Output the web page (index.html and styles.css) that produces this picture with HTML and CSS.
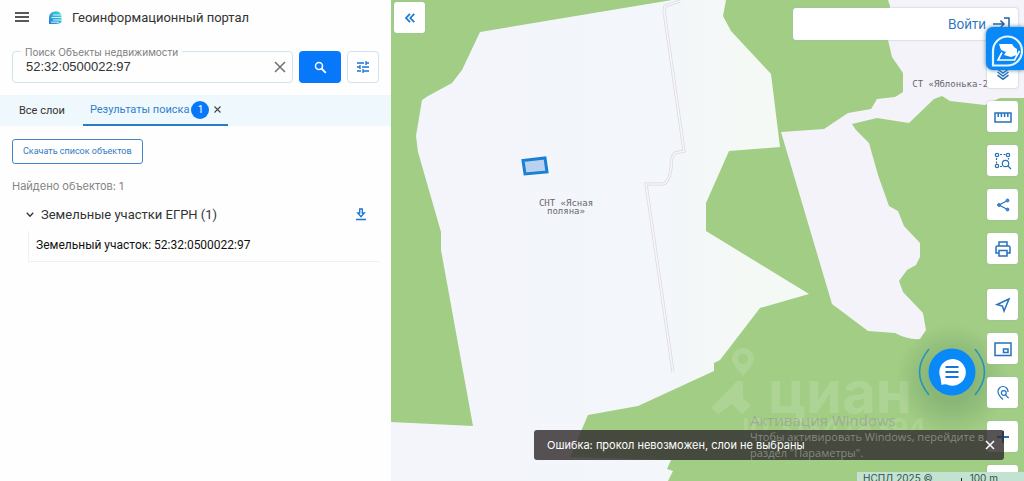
FILE: index.html
```html
<!DOCTYPE html>
<html lang="ru">
<head>
<meta charset="utf-8">
<title>Геоинформационный портал</title>
<link rel="stylesheet" href="styles.css">
</head>
<body>
<div class="app">
  <aside class="panel">
    <header class="header">
      <button class="icon-btn" type="button" aria-label="Меню">
        <svg width="14" height="12" viewBox="0 0 14 12"><path d="M0 1h14M0 5h14M0 9h14" stroke="#222" stroke-width="1.5"/></svg>
      </button>
      <svg class="logo" width="15" height="15" viewBox="0 0 15 15">
        <defs><linearGradient id="lg" x1="0" y1="1" x2="1" y2="0"><stop offset="0" stop-color="#2a7be0"/><stop offset="1" stop-color="#35dfd0"/></linearGradient></defs>
        <path d="M1 14V7a6.500 6.500 0 0 1 12.500-1.500V12q-2 2-5.500 2z" fill="url(#lg)"/>
        <path d="M5 5h9M3.500 7.500h11M5 10h9M3 12.200h8" stroke="#e8fbff" stroke-width=".9"/>
      </svg>
      <h1 class="title">Геоинформационный портал</h1>
    </header>

    <form class="search">
      <div class="field">
        <label class="field-label" for="query">Поиск Объекты недвижимости</label>
        <input class="field-input" id="query" type="text" value="52:32:0500022:97">
        <button class="icon-btn" type="button" aria-label="Очистить">
          <svg width="12" height="12" viewBox="0 0 12 12"><path d="M1 1l10 10M11 1L1 11" stroke="#707070" stroke-width="1.5"/></svg>
        </button>
      </div>
      <button class="find" type="button" aria-label="Найти">
        <svg width="13" height="13" viewBox="0 0 13 13" fill="none" stroke="#fff"><circle cx="5" cy="5" r="3.500" stroke-width="1.500"/><path d="M7.500 7.500l4.300 4.300" stroke-width="1.900"/></svg>
      </button>
      <button class="tune" type="button" aria-label="Фильтр">
        <svg width="14" height="14" viewBox="0 0 14 14" fill="none" stroke="#1976d2" stroke-width="1.300"><path d="M1 3h7M10 3h3M10 1v4M1 7h3M6 7h7M4 5v4M1 11h4M7 11h6M7 9v4"/></svg>
      </button>
    </form>

    <nav class="tabs">
      <button class="tab" type="button">Все слои</button>
      <div class="tab-active">
        <button class="tab tab-current" type="button">Результаты поиска<span class="count">1</span></button>
        <button class="icon-btn" type="button" aria-label="Закрыть вкладку">
          <svg width="7" height="7" viewBox="0 0 7 7"><path d="M.5.5l6 6M6.500.5l-6 6" stroke="#444" stroke-width="1.100"/></svg>
        </button>
      </div>
    </nav>

    <section class="results">
      <button class="download" type="button">Скачать список объектов</button>
      <p class="found">Найдено объектов: 1</p>
      <div class="group">
        <button class="group-name" type="button">
          <svg width="8" height="6" viewBox="0 0 8 6"><path d="M.8.8L4 4.200 7.200.8" fill="none" stroke="#333" stroke-width="1.300"/></svg>
          Земельные участки ЕГРН (1)
        </button>
        <button class="icon-btn" type="button" aria-label="Скачать">
          <svg width="10" height="13" viewBox="0 0 10 13" fill="none" stroke="#1976d2" stroke-width="1.300"><path d="M3.700 1h2.600v4h2L5 8.700 1.700 5h2zM0 11.500h10"/></svg>
        </button>
      </div>
      <a class="item" href="#parcel">Земельный участок: 52:32:0500022:97</a>
    </section>
  </aside>

  <main class="map">
    <svg class="canvas" viewBox="391 0 633 481" preserveAspectRatio="xMinYMin slice">
      <defs>
        <linearGradient id="land" gradientUnits="userSpaceOnUse" x1="391" y1="0" x2="800" y2="0"><stop offset="0" stop-color="#f3f5fa"/><stop offset=".68" stop-color="#f3f6fa"/><stop offset=".85" stop-color="#f4f9f6"/></linearGradient>
        <radialGradient id="halo"><stop offset=".4" stop-color="#4d7a55" stop-opacity=".28"/><stop offset="1" stop-color="#4d7a55" stop-opacity="0"/></radialGradient>
      </defs>
      <rect x="391" width="633" height="481" fill="#a1cd84"/>
      <path fill="url(#land)" d="M672 0H726L723 16 731 31 771 74 780 147 729 151 706 203V231L809 294 760 308 720 360 714 363V371L638 406 588 415 570 457 671 460 667 469 673 471 668 481H391V422L473 426 441 250V232L418 152 416 136 422 100 428 96 452 83 462 70 480 32z"/>
      <path fill="#f4f3fa" d="M888 0L890 6 888 40 892 57 903 73V92L895 97 877 99 871 109 848 113 824 129 781 132 832 304 868 331 895 333Q908 340 920 339L926 330 923 313 903 292 899 281 907 270 916 265 920 257V243L904 226 898 211 889 206 878 175 869 143 856 130 852 124 877 118 909 123 934 99 942 96 950 101 985 105 1000 98H1024V0z"/>
      <g fill="none"><path stroke="#ddd6df" stroke-width="3" d="M680 1L665 6 664 11 684 151 675 153Q671 156 671 168 669 184 662 184H646L673 372"/><path stroke="#f4f5fa" stroke-width="1.700" d="M680 1L665 6 664 11 684 151 675 153Q671 156 671 168 669 184 662 184H646L673 372"/></g>
      <path d="M523 160.500L545 158 547 172 525 174z" fill="#b9d2f0" stroke="#1a80d6" stroke-width="3"/>
      <g class="place"><text x="566" y="206">СНТ «Ясная</text><text x="566" y="214">поляна»</text><text x="953" y="87">СТ «Яблонька-2»</text></g>
      <g class="mark">
        <path d="M743 348a11 11 0 0 1 11 11q0 6-11 17-11-11-11-17a11 11 0 0 1 11-11zm0 6a5 5 0 1 0 0 10 5 5 0 0 0 0-10z"/>
        <path d="M711 408L737 381H743V398L751 406 742 414 732 404 718 414z"/>
        <text class="mark-name" x="768" y="413">циан</text><text class="mark-id" x="742" y="438">ID 318478394</text>
      </g>
      <circle cx="952" cy="380" r="56" fill="url(#halo)"/>
    </svg>

    <button class="tool collapse" type="button" aria-label="Свернуть панель">
      <svg width="10" height="10" viewBox="0 0 10 10" fill="none" stroke="#1976d2" stroke-width="1.700"><path d="M5 .8L1 5l4 4.200M9.300.8l-4 4.200 4 4.200"/></svg>
    </button>

    <div class="login-bar">
      <a class="login" href="#login">Войти
        <svg width="17" height="14" viewBox="0 0 17 14" fill="none" stroke="#1c62a8" stroke-width="1.500"><path d="M0 7h11M7.500 3.500L11 7l-3.500 3.500M11 1h5v12h-5"/></svg>
      </a>
    </div>

    <div class="tools">
      <button class="tool" type="button" aria-label="Слои"><svg viewBox="0 0 20 20"><path d="M4.500 6l5.500-4 5.500 4-5.500 4zM4.500 9l5.500 4 5.500-4M4.500 12.200l5.500 4 5.500-4"/></svg></button>
      <button class="tool" type="button" aria-label="Линейка"><svg viewBox="0 0 20 20"><path d="M2 6h16v9H2zM5.200 6v4M8.400 6v4M11.600 6v4M14.800 6v4"/></svg></button>
      <button class="tool" type="button" aria-label="Поиск в области"><svg viewBox="0 0 20 20"><g stroke-width="1.200"><circle cx="4" cy="4" r="1.700"/><circle cx="15" cy="4" r="1.700"/><circle cx="4" cy="15" r="1.700"/><path d="M7 3.500h2m1.500 0h2M3.500 7v2m0 1.500v2M15.500 7v1.500M7 15.500h2M15 15l3 3"/><circle cx="12.500" cy="12.500" r="3.200"/></g></svg></button>
      <button class="tool" type="button" aria-label="Поделиться"><svg viewBox="0 0 20 20"><path stroke-width="1.200" d="M14.500 5.500L6 10l8.500 4.500"/><g fill="#4c8fd8" stroke-width="1"><circle cx="14.500" cy="5.500" r="1.400"/><circle cx="6" cy="10" r="1.400"/><circle cx="14.500" cy="14.500" r="1.400"/></g></svg></button>
      <button class="tool" type="button" aria-label="Печать"><svg viewBox="0 0 20 20"><path d="M6 7V3h8v4M6 14H3V8.500Q3 7 4.500 7h11Q17 7 17 8.500V14h-3M6 11.500h8V17H6z"/></svg></button>
      <button class="tool second" type="button" aria-label="Моё местоположение"><svg viewBox="0 0 20 20"><path d="M16 4L4 9.500l5.500 1.500L11 16z"/></svg></button>
      <button class="tool" type="button" aria-label="Обзорная карта"><svg viewBox="0 0 20 20"><path d="M2 4h16v12.500H2zM10.500 10h4.500v3.500h-4.500z"/></svg></button>
      <button class="tool" type="button" aria-label="Поиск по точке"><svg viewBox="0 0 20 20"><g stroke-width="1.200"><path d="M10 16.500Q5 12 5 8.500a5 5 0 0 1 10 0v.5"/><circle cx="10.800" cy="10" r="2.400"/><path d="M12.500 12l3.200 3.200"/></g></svg></button>
      <button class="tool" type="button" aria-label="Приблизить"><svg viewBox="0 0 20 20"><path stroke-width="2" d="M4 10h12M10 4v12"/></svg></button>
      <button class="tool" type="button" aria-label="Отдалить"><svg viewBox="0 0 20 20"><path stroke-width="2" d="M4 10h12"/></svg></button>
    </div>

    <button class="side-widget" type="button" aria-label="Помощник">
      <svg width="32" height="32" viewBox="0 0 32 32"><path d="M2 30.500V16A14.500 14.500 0 1 1 16.500 30.500z" fill="none" stroke="#e3f5ff" stroke-width="2.200"/><path d="M8 9h13l2 3 3 2v6l-6 2-7-2 2-3-5-2z" fill="#fff"/><path d="M11 17.500L7 25h16.500l5-9" fill="none" stroke="#fff" stroke-width="1.600"/></svg>
    </button>

    <button class="chat" type="button" aria-label="Чат">
      <svg width="68" height="50" viewBox="0 0 68 50"><circle cx="34" cy="25" r="23.500" fill="#0989f8"/><path d="M23.500 38l-1-7A13.300 13.300 0 1 1 29 37.500q-3-.5-5.500.5z" fill="#fff"/><path d="M27.500 20h13M27.500 25h13M27.500 30h13" stroke="#1976d2" stroke-width="1.800"/><path d="M11 2Q-8 25 11 48M57 2Q76 25 57 48" fill="none" stroke="#2795b8" stroke-width="1.600"/></svg>
    </button>

    <div class="scale"><span>НСПД 2025 ©</span><span class="tick"></span><span>100 m</span></div>

    <div class="toast" role="alert">
      <span>Ошибка: прокол невозможен, слои не выбраны</span>
      <button class="icon-btn" type="button" aria-label="Закрыть">
        <svg width="10" height="10" viewBox="0 0 10 10"><path d="M1 1l8 8M9 1L1 9" stroke="#fff" stroke-width="1.500"/></svg>
      </button>
    </div>

    <div class="activation"><p class="activation-title">Активация Windows</p><p>Чтобы активировать Windows, перейдите в раздел "Параметры".</p></div>
  </main>
</div>
</body>
</html>
```
FILE: styles.css
```css
* { box-sizing: border-box; }
body { margin: 0; font-family: Inter, sans-serif; color: #333; background: #fdfefd; }
button { font: inherit; color: inherit; border: 0; padding: 0; background: none; cursor: pointer; }
h1, p { margin: 0; }
a { text-decoration: none; }
svg { display: block; flex: none; }
.icon-btn { display: flex; align-items: center; }

.app { display: flex; height: 100vh; overflow: hidden; }
.panel { flex: 0 0 391px; display: flex; flex-direction: column; }
.header { display: flex; align-items: center; height: 35px; padding: 0 15px; }
.logo { margin: 0 9px 0 19px; }
.title { font: 400 13px/20px Roboto, sans-serif; }

.search { display: flex; gap: 6px; padding: 16px 12px 0; }
.field { position: relative; flex: 1; display: flex; align-items: center; height: 32px; padding: 0 6px 0 13px; border: 1px solid #d3e3ec; border-radius: 4px; }
.field-label { position: absolute; top: -7px; left: 8px; padding: 0 4px; background: #fdfefd; font-size: 10px; line-height: 14px; color: #808080; }
.field-input { flex: 1; min-width: 0; padding: 0; border: 0; outline: 0; background: none; font: 13px/18px "Liberation Sans", sans-serif; color: #333; }
.find, .tune { display: flex; align-items: center; justify-content: center; height: 32px; border-radius: 4px; }
.find { width: 42px; background: #0878fb; }
.tune { width: 32px; border: 1px solid #d3e1ee; background: #fff; }

.tabs { display: flex; align-items: stretch; gap: 18px; height: 31px; margin-top: 12px; padding: 0 19px; background: #eff8fd; font-family: Roboto, sans-serif; font-size: 11px; }
.tab-active { display: flex; align-items: center; gap: 5px; padding: 0 7px; border-bottom: 2px solid #2a7cc7; }
.tab-current { display: flex; align-items: center; gap: 2px; color: #2f7fd0; }
.count { width: 18px; border-radius: 50%; background: #0878fb; color: #fff; font-size: 10px; line-height: 18px; text-align: center; }

.results { padding: 12px 12px 0; }
.download { height: 25px; padding: 0 10px; border: 1px solid #4285cb; border-radius: 3px; background: #fff; font-family: Roboto, sans-serif; font-size: 9px; color: #3379c2; }
.found { margin-top: 13px; font-size: 11px; line-height: 18px; color: #858585; }
.group { display: flex; justify-content: space-between; margin: 11px 13px 0 14px; line-height: 18px; font-family: Roboto, sans-serif; font-size: 13px; }
.group-name { display: flex; align-items: center; gap: 7px; }
.item { display: block; margin: 7px 0 0 16px; padding: 6px 7px 8px; border-left: 1px solid #eff1f1; border-bottom: 1px solid #eff1f1; font: 12px/16px Roboto, sans-serif; color: #111; }

.map { position: relative; flex: 1; min-width: 0; overflow: hidden; background: #a1cd84; }
.canvas { width: 100%; height: 100%; }
.place { font: 9px "DejaVu Sans Mono", monospace; fill: #686670; text-anchor: middle; }
.mark { fill: #fff; fill-opacity: .14; font-family: Inter, sans-serif; font-weight: 700; }
.mark-name { font-size: 58px; }
.mark-id { font-size: 27px; }

.tool { display: flex; align-items: center; justify-content: center; width: 31px; height: 31px; flex: none; border-radius: 3px; background: #fff; box-shadow: 0 0 2px #9fb8b0; }
.tools svg { width: 20px; height: 20px; fill: none; stroke: #2672bd; stroke-width: 1.5; }
.collapse { position: absolute; top: 2px; left: 3px; }
.tools { position: absolute; top: 57px; right: 6px; display: flex; flex-direction: column; gap: 13px; }
.second { margin-top: 12px; }
.login-bar { position: absolute; top: 8px; right: 6px; left: 402px; display: flex; justify-content: flex-end; align-items: center; height: 32px; padding: 0 8px; border-radius: 3px; background: #fff; box-shadow: 0 0 2px #9fb8c8; }
.login { display: flex; align-items: center; gap: 7px; font-size: 13px; color: #2873c2; }
.side-widget { position: absolute; top: 27px; right: 0; width: 38px; height: 43px; padding: 5px 0 0 5px; overflow: hidden; border-radius: 7px 0 0 7px; background: #0989f8; box-shadow: 0 0 4px #417a9a; }
.chat { position: absolute; right: 38px; bottom: 84px; }
.scale { position: absolute; right: 0; bottom: 0; display: flex; justify-content: space-between; width: 167px; height: 9px; padding: 0 26px 0 6px; background: #c3e2d2; font-size: 10px; line-height: 12px; color: #355048; }
.tick { width: 1px; margin: 6px 0 0 20px; background: #222; }
.toast { position: absolute; right: 20px; bottom: 21px; left: 143px; display: flex; align-items: center; justify-content: space-between; height: 30px; padding: 0 9px 0 13px; border-radius: 3px; background: rgba(50, 44, 46, .82); font-size: 11px; color: #fff; }
.activation { position: absolute; right: 30px; bottom: 20px; width: 244px; font: 11px/16px "Open Sans", sans-serif; color: rgba(155, 160, 149, .75); }
.activation-title { font-size: 15px; line-height: 18px; }
```
